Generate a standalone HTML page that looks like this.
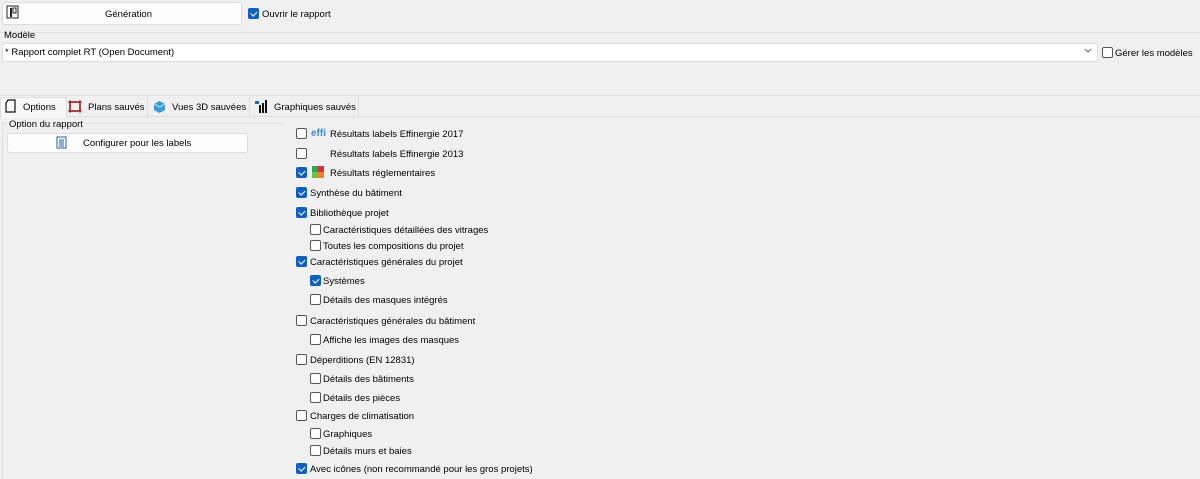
<!DOCTYPE html>
<html><head><meta charset="utf-8"><style>
body{margin:0;width:1200px;height:479px;background:#f0f0f0;font-family:"Liberation Sans",sans-serif;font-size:9.5px;color:#000;position:relative;overflow:hidden}
.a{position:absolute}
.cb{position:absolute;box-sizing:border-box;width:11px;height:11px;border:1px solid #555;border-radius:2px;background:#fff}
.ck{background:#1060c0;border-color:#1060c0}
.ck:after{content:"";position:absolute;left:3px;top:1px;width:2.5px;height:5px;border:solid #fff;border-width:0 1.3px 1.3px 0;transform:rotate(45deg)}
.t{position:absolute;white-space:nowrap;line-height:12px;margin-top:1.5px}
</style></head><body>
<div class="a" style="left:2px;top:2px;width:238px;height:21px;background:#fdfdfd;border:1px solid #ddd;border-radius:3px"></div>
<svg class="a" style="left:6px;top:5px" width="14" height="14"><rect x="1" y="1" width="11" height="12" fill="none" stroke="#222"/><rect x="4" y="3" width="2" height="9" fill="#222"/><rect x="7" y="3" width="3" height="5" fill="none" stroke="#222"/></svg>
<div class="t" style="left:105px;top:7px">Génération</div>
<div class="cb ck" style="left:248px;top:8px"></div>
<div class="t" style="left:262px;top:7px">Ouvrir le rapport</div>
<div class="a" style="left:0;top:32px;width:1200px;height:1px;background:#ddd"></div>
<div class="t" style="left:4px;top:28px">Modèle</div>
<div class="a" style="left:2px;top:43px;width:1094px;height:17px;background:#fff;border:1px solid #ddd;border-radius:2px"></div>
<div class="t" style="left:5px;top:45px">* Rapport complet RT (Open Document)</div>
<svg class="a" style="left:1084px;top:48px" width="8" height="6"><path d="M1 1L4 4L7 1" fill="none" stroke="#666"/></svg>
<div class="cb" style="left:1102px;top:47px"></div>
<div class="t" style="left:1115px;top:46px">Gérer les modèles</div>
<div class="a" style="left:0;top:95px;width:1200px;height:1px;background:#ddd"></div>
<div class="a" style="left:0;top:116px;width:1200px;height:1px;background:#ddd"></div>
<div class="a" style="left:0;top:97px;width:65px;height:20px;background:#f7f7f7;border:1px solid #ddd;border-bottom:none"></div>
<svg class="a" style="left:5px;top:99px" width="12" height="14"><path d="M3 1H10V13H1V4Z" fill="none" stroke="#111" stroke-width="1.2"/></svg>
<div class="t" style="left:23px;top:100px">Options</div>
<svg class="a" style="left:68px;top:100px" width="14" height="13"><rect x="2" y="2" width="10" height="9" fill="none" stroke="#8a1010" stroke-width="1.5"/><path d="M0 2H14M0 11H14M2 0V13M12 0V13" stroke="#8a1010" stroke-width=".8"/></svg>
<div class="t" style="left:88px;top:100px">Plans sauvés</div>
<div class="a" style="left:147px;top:97px;width:1px;height:19px;background:#ddd"></div>
<svg class="a" style="left:153px;top:100px" width="13" height="13"><path d="M6.5 1L12 4V10L6.5 13L1 10V4Z" fill="#3a9ad8"/><path d="M1 4L6.5 7L12 4" fill="none" stroke="#bfe0f5"/></svg>
<div class="t" style="left:172px;top:100px">Vues 3D sauvées</div>
<div class="a" style="left:249px;top:97px;width:1px;height:19px;background:#ddd"></div>
<svg class="a" style="left:255px;top:99px" width="14" height="15"><rect x="0" y="2" width="4" height="3" fill="#1a70c0"/><rect x="4" y="6" width="2" height="8" fill="#111"/><rect x="7" y="4" width="2" height="10" fill="#111"/><rect x="10" y="1" width="2" height="13" fill="#111"/></svg>
<div class="t" style="left:274px;top:100px">Graphiques sauvés</div>
<div class="a" style="left:358px;top:97px;width:1px;height:19px;background:#ddd"></div>
<div class="a" style="left:2px;top:123px;width:0.8px;height:356px;background:#ddd"></div>
<div class="a" style="left:2px;top:123px;width:280px;height:1px;background:#ddd"></div>
<div class="t" style="left:7px;top:117px;background:#f0f0f0;padding:0 2px">Option du rapport</div>
<div class="a" style="left:7px;top:133px;width:239px;height:18px;background:#fdfdfd;border:1px solid #ddd;border-radius:3px"></div>
<svg class="a" style="left:56px;top:136px" width="11" height="13"><rect x="1" y="1" width="9" height="11" fill="none" stroke="#1a5fa8"/><path d="M3 4H8M3 6H8M3 8H8M3 10H8" stroke="#1a5fa8"/></svg>
<div class="t" style="left:83px;top:136px">Configurer pour les labels</div>

<div class="cb" style="left:296px;top:128px"></div>
<div class="t" style="left:311px;top:126px;color:#3a8ad0;font-weight:bold;font-size:10px">effi</div>
<div class="t" style="left:330px;top:127px">Résultats labels Effinergie 2017</div>
<div class="cb" style="left:296px;top:148px"></div>
<div class="t" style="left:330px;top:147px">Résultats labels Effinergie 2013</div>
<div class="cb ck" style="left:296px;top:167px"></div>
<div class="a" style="left:312px;top:166px;width:6px;height:6px;background:#2aa860"></div><div class="a" style="left:318px;top:166px;width:6px;height:6px;background:#d83030"></div><div class="a" style="left:312px;top:172px;width:6px;height:6px;background:#6ac040"></div><div class="a" style="left:318px;top:172px;width:6px;height:6px;background:#f08030"></div>
<div class="t" style="left:330px;top:166px">Résultats réglementaires</div>
<div class="cb ck" style="left:296px;top:187px"></div><div class="t" style="left:310px;top:186px">Synthèse du bâtiment</div>
<div class="cb ck" style="left:296px;top:207px"></div><div class="t" style="left:310px;top:206px">Bibliothèque projet</div>
<div class="cb" style="left:310px;top:224px"></div><div class="t" style="left:323px;top:223px">Caractéristiques détaillées des vitrages</div>
<div class="cb" style="left:310px;top:240px"></div><div class="t" style="left:323px;top:239px">Toutes les compositions du projet</div>
<div class="cb ck" style="left:296px;top:256px"></div><div class="t" style="left:310px;top:255px">Caractéristiques générales du projet</div>
<div class="cb ck" style="left:310px;top:275px"></div><div class="t" style="left:323px;top:274px">Systèmes</div>
<div class="cb" style="left:310px;top:294px"></div><div class="t" style="left:323px;top:293px">Détails des masques intégrés</div>
<div class="cb" style="left:296px;top:315px"></div><div class="t" style="left:310px;top:314px">Caractéristiques générales du bâtiment</div>
<div class="cb" style="left:310px;top:334px"></div><div class="t" style="left:323px;top:333px">Affiche les images des masques</div>
<div class="cb" style="left:296px;top:354px"></div><div class="t" style="left:310px;top:353px">Déperditions (EN 12831)</div>
<div class="cb" style="left:310px;top:373px"></div><div class="t" style="left:323px;top:372px">Détails des bâtiments</div>
<div class="cb" style="left:310px;top:392px"></div><div class="t" style="left:323px;top:391px">Détails des pièces</div>
<div class="cb" style="left:296px;top:410px"></div><div class="t" style="left:310px;top:409px">Charges de climatisation</div>
<div class="cb" style="left:310px;top:428px"></div><div class="t" style="left:323px;top:427px">Graphiques</div>
<div class="cb" style="left:310px;top:445px"></div><div class="t" style="left:323px;top:444px">Détails murs et baies</div>
<div class="cb ck" style="left:296px;top:463px"></div><div class="t" style="left:310px;top:462px">Avec icônes (non recommandé pour les gros projets)</div>
</body></html>
